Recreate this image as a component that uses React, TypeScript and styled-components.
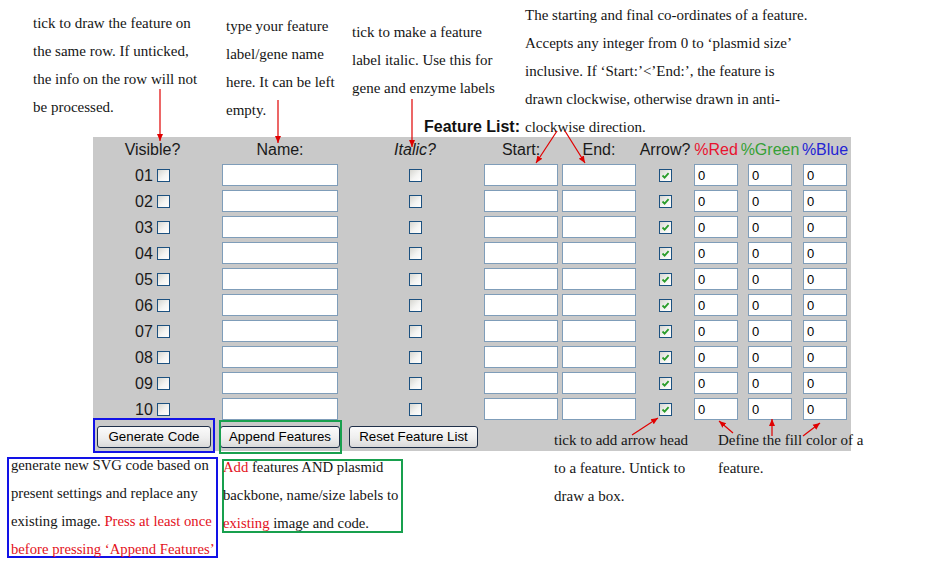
import React from "react";
import styled, { createGlobalStyle } from "styled-components";

const GlobalStyle = createGlobalStyle`
  html, body { margin: 0; padding: 0; background: #fff; }
  body { font-family: "Liberation Sans", Arial, sans-serif; }
`;

const Canvas = styled.div`
  position: relative;
  width: 945px;
  height: 567px;
  overflow: hidden;
  background: #fff;
  padding: 116px 0 0 93px;
  box-sizing: border-box;
`;

const FormBlock = styled.div`
  width: 758px;
  display: flex;
  flex-direction: column;
`;

const Caption = styled.div`
  font: bold 16px/21px "Liberation Sans", Arial, sans-serif;
  color: #111;
  text-align: center;
`;

const Panel = styled.div`
  background: #c9c9c9;
  display: grid;
  grid-template-columns: 119px 136px 134px 78px 78px 54px 48px 60px 50px;
  grid-template-rows: 25px repeat(10, 26px) 29px;
  padding-right: 1px;
`;

const HeadCell = styled.div<{ $color?: string; $italic?: boolean }>`
  display: flex;
  align-items: center;
  justify-content: center;
  font-size: 16px;
  font-style: ${(p) => (p.$italic ? "italic" : "normal")};
  color: ${(p) => p.$color || "#1a1a1a"};
  white-space: nowrap;
`;

const Cell = styled.div`
  display: flex;
  align-items: center;
  justify-content: center;
  gap: 4px;
`;

const RowNum = styled.span`
  font-size: 16px;
  color: #1a1a1a;
  line-height: 18px;
  padding-top: 1px;
`;

const TextBox = styled.input<{ $w: number }>`
  width: ${(p) => p.$w}px;
  height: 22px;
  box-sizing: border-box;
  border: 1px solid #7f9db9;
  background: #fff;
  font: 13px "Liberation Sans", Arial, sans-serif;
  color: #000;
  padding: 0 3px;
  margin: 0;
  outline: none;
`;

const Check = styled.span`
  display: inline-flex;
  align-items: center;
  justify-content: center;
  width: 13px;
  height: 13px;
  box-sizing: border-box;
  border: 1px solid #1c5180;
  background: linear-gradient(135deg, #d6d6d0 0%, #f4f4f2 55%, #ffffff 100%);
`;

const ButtonRow = styled.div`
  grid-column: 1 / -1;
  display: flex;
  align-items: center;
  gap: 9px;
  padding-left: 4px;
`;

const Button = styled.button<{ $w: number }>`
  width: ${(p) => p.$w}px;
  height: 22px;
  box-sizing: border-box;
  border: 1px solid #1f2f48;
  border-radius: 3px;
  background: linear-gradient(#fbfbfb 0%, #eeeeee 55%, #dadada 100%);
  font: 13.3px "Liberation Sans", Arial, sans-serif;
  color: #000;
  padding: 0;
  margin: 0;
`;

const Note = styled.div<{ $x: number; $y: number }>`
  position: absolute;
  left: ${(p) => p.$x}px;
  top: ${(p) => p.$y}px;
  font: 15px/28px "Liberation Serif", "Times New Roman", serif;
  color: #151515;
  white-space: nowrap;
`;

const Red = styled.span`
  color: #e3111b;
`;

const Frame = styled.div<{ $x: number; $y: number; $w: number; $h: number; $color: string }>`
  position: absolute;
  left: ${(p) => p.$x}px;
  top: ${(p) => p.$y}px;
  width: ${(p) => p.$w}px;
  height: ${(p) => p.$h}px;
  box-sizing: border-box;
  border: 2px solid ${(p) => p.$color};
`;

const FrameText = styled.div<{ $dx: number; $dy: number }>`
  margin: ${(p) => p.$dy}px 0 0 ${(p) => p.$dx}px;
  font: 14.7px/28px "Liberation Serif", "Times New Roman", serif;
  color: #151515;
  white-space: nowrap;
`;

const Overlay = styled.svg`
  position: absolute;
  left: 0;
  top: 0;
  pointer-events: none;
`;

const CheckMark = () => (
  <svg width="9" height="9" viewBox="0 0 9 9">
    <path d="M1.5 4.5 L3.6 6.6 L7.6 2.2" fill="none" stroke="#2a9d2a" strokeWidth="1.8" />
  </svg>
);

const arrows: [number, number, number, number][] = [
  [160, 89, 160, 141],
  [278, 100, 278, 143],
  [412, 99, 412, 147],
  [557, 131, 536, 163],
  [565, 131, 585, 163],
  [632, 435, 658, 418],
  [733, 433, 719, 421],
  [772, 436, 772, 419],
  [803, 436, 820, 423],
];

const rows = Array.from({ length: 10 }, (_, i) => String(i + 1).padStart(2, "0"));

export default function App() {
  return (
    <>
      <GlobalStyle />
      <Canvas>
        <FormBlock>
          <Caption>Feature List:</Caption>
          <Panel>
            <HeadCell>Visible?</HeadCell>
            <HeadCell>Name:</HeadCell>
            <HeadCell $italic>Italic?</HeadCell>
            <HeadCell>Start:</HeadCell>
            <HeadCell>End:</HeadCell>
            <HeadCell>Arrow?</HeadCell>
            <HeadCell $color="#e8132f">%Red</HeadCell>
            <HeadCell $color="#35a035">%Green</HeadCell>
            <HeadCell $color="#2424d4">%Blue</HeadCell>
            {rows.map((n) => (
              <React.Fragment key={n}>
                <Cell>
                  <RowNum>{n}</RowNum>
                  <Check />
                </Cell>
                <Cell>
                  <TextBox $w={116} defaultValue="" />
                </Cell>
                <Cell>
                  <Check />
                </Cell>
                <Cell>
                  <TextBox $w={74} defaultValue="" />
                </Cell>
                <Cell>
                  <TextBox $w={74} defaultValue="" />
                </Cell>
                <Cell>
                  <Check>
                    <CheckMark />
                  </Check>
                </Cell>
                <Cell>
                  <TextBox $w={44} defaultValue="0" />
                </Cell>
                <Cell>
                  <TextBox $w={44} defaultValue="0" />
                </Cell>
                <Cell>
                  <TextBox $w={44} defaultValue="0" />
                </Cell>
              </React.Fragment>
            ))}
            <ButtonRow>
              <Button $w={114}>Generate Code</Button>
              <Button $w={120}>Append Features</Button>
              <Button $w={129}>Reset Feature List</Button>
            </ButtonRow>
          </Panel>
        </FormBlock>

        <Note $x={33} $y={9}>
          tick to draw the feature on
          <br />
          the same row. If unticked,
          <br />
          the info on the row will not
          <br />
          be processed.
        </Note>
        <Note $x={226} $y={12}>
          type your feature
          <br />
          label/gene name
          <br />
          here. It can be left
          <br />
          empty.
        </Note>
        <Note $x={352} $y={18}>
          tick to make a feature
          <br />
          label italic. Use this for
          <br />
          gene and enzyme labels
        </Note>
        <Note $x={525} $y={1}>
          The starting and final co-ordinates of a feature.
          <br />
          Accepts any integer from 0 to ‘plasmid size’
          <br />
          inclusive. If ‘Start:’&lt;’End:’, the feature is
          <br />
          drawn clockwise, otherwise drawn in anti-
          <br />
          clockwise direction.
        </Note>
        <Note $x={554} $y={426}>
          tick to add arrow head
          <br />
          to a feature. Untick to
          <br />
          draw a box.
        </Note>
        <Note $x={718} $y={426}>
          Define the fill color of a
          <br />
          feature.
        </Note>

        <Frame $x={93} $y={418} $w={122} $h={35} $color="#1212e6" />
        <Frame $x={219} $y={420} $w={123} $h={34} $color="#18a04e" />
        <Frame $x={7} $y={457} $w={211} $h={101} $color="#1212e6">
          <FrameText $dx={2} $dy={-8}>
            generate new SVG code based on
            <br />
            present settings and replace any
            <br />
            existing image. <Red>Press at least once</Red>
            <br />
            <Red>before pressing ‘Append Features’</Red>
          </FrameText>
        </Frame>
        <Frame $x={222} $y={459} $w={181} $h={74} $color="#18a04e">
          <FrameText $dx={-1} $dy={-8}>
            <Red>Add</Red> features AND plasmid
            <br />
            backbone, name/size labels to
            <br />
            <Red>existing</Red> image and code.
          </FrameText>
        </Frame>

        <Overlay width="945" height="567" viewBox="0 0 945 567">
          <defs>
            <marker
              id="head"
              markerUnits="userSpaceOnUse"
              markerWidth="8"
              markerHeight="8"
              refX="7"
              refY="4"
              orient="auto"
            >
              <path d="M0 1 L7 4 L0 7 Z" fill="#e00000" />
            </marker>
          </defs>
          {arrows.map(([x1, y1, x2, y2], i) => (
            <line
              key={i}
              x1={x1}
              y1={y1}
              x2={x2}
              y2={y2}
              stroke="#e00000"
              strokeWidth="1.2"
              markerEnd="url(#head)"
            />
          ))}
        </Overlay>
      </Canvas>
    </>
  );
}
